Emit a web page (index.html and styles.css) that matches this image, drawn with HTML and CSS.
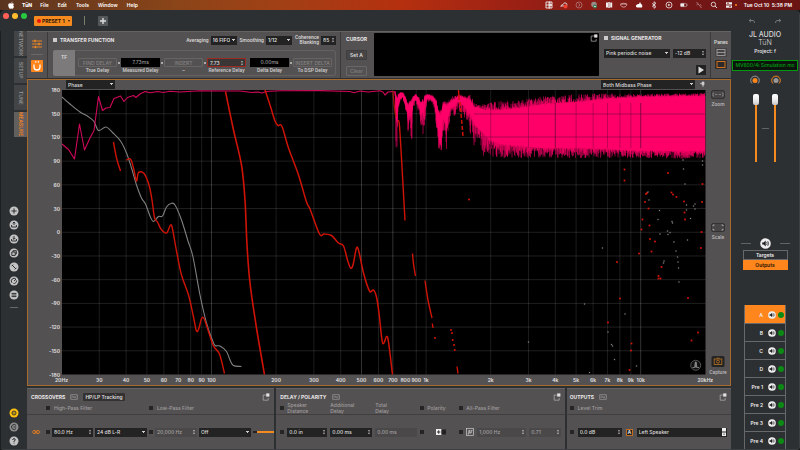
FILE: index.html
```html
<!DOCTYPE html>
<html lang="en">
<head>
<meta charset="utf-8">
<title>TüN</title>
<link rel="stylesheet" href="styles.css">
</head>
<body>
<svg width="0" height="0" class="defs" aria-hidden="true">
  <symbol id="popout" viewBox="0 0 8 8"><path d="M4 2H1.2v5.2h5V5" fill="none" stroke="#b5b3b3" stroke-width=".7"/><rect x="4.2" y=".4" width="3.2" height="3.2" fill="#e4e2e2"/></symbol>
  <symbol id="graph" viewBox="0 0 8 6"><rect x=".4" y=".4" width="7.2" height="5.2" rx="1" fill="none" stroke="#a5a3a3" stroke-width=".6"/><path d="M1 4.400l2-1.600 1.300.9L7 1.400M1 2h1.800L7 4.600" fill="none" stroke="#a5a3a3" stroke-width=".5"/></symbol>
  <symbol id="step" viewBox="0 0 4 6"><path d="M.8 2.200L2 .8l1.200 1.400zM.8 3.800L2 5.200l1.200-1.400z" fill="#c9c7c7"/></symbol>
  <symbol id="speaker" viewBox="0 0 10 10"><circle cx="5" cy="5" r="4.800" fill="#efefef"/><path d="M2 4h1.300L5.200 2.300v5.400L3.300 6H2z" fill="#1c1e1f"/><path d="M6 3.700q1 1.300 0 2.600M7 2.800q1.600 2.200 0 4.400" fill="none" stroke="#1c1e1f" stroke-width=".7"/></symbol>
</svg>

<nav class="menubar" aria-label="Menu bar">
  <svg class="apple" viewBox="0 0 8 8"><path d="M5.600.4Q4.400.7 4.300 1.900 5.500 1.800 5.600.4zM6.900 2.800Q5.600 1.700 4.300 2.400 3 1.800 1.900 2.600.8 3.600 1.400 5.600 2 7.400 2.900 7.700q.6 0 1.300-.3.8.3 1.400.3.9-.4 1.400-1.900-1.500-1.200-.1-3z" fill="#fff"/></svg>
  <a class="app" href="#">TüN</a><a href="#">File</a><a href="#">Edit</a><a href="#">Tools</a><a href="#">Window</a><a href="#">Help</a>
  <div class="status">
    <svg viewBox="0 0 8 8"><path d="M1 1h4v6H1zM4 1h3v3H4zM4 4h3v3H4zM1 4h6" fill="none" stroke="#eee" stroke-width=".9"/></svg>
    <svg viewBox="0 0 8 8"><path d="M1 5.500q0-2 2-2 1-2.500 3-1.500 1.300 1 .7 3H1.500z" fill="none" stroke="#ddd" stroke-width=".9"/><circle cx="5.500" cy="5.500" r="2" fill="#f04030"/></svg>
    <svg viewBox="0 0 8 8"><circle cx="4" cy="4" r="3" fill="none" stroke="#b07a7a" stroke-width=".8"/><path d="M3.300 2.500L5 4 3.300 5.500" fill="none" stroke="#b07a7a" stroke-width=".8"/></svg>
    <svg viewBox="0 0 8 8"><circle cx="4" cy="3.500" r="2.800" fill="#9a8a8a"/><circle cx="5" cy="5.500" r="2" fill="#3a7a50"/><path d="M4 5.500h2" stroke="#fff" stroke-width=".7"/></svg>
    <svg viewBox="0 0 8 8"><path d="M1 1.500h2v5H1zM3.300 1h1.500v6H3.300zM5.200 1.500h2v5h-2z" fill="#eee"/></svg>
    <svg viewBox="0 0 8 8"><path d="M.7 3h6v1.200q-1 2-3 2t-3-2z M.7 3q3-1.500 6 0" fill="none" stroke="#c9a0a0" stroke-width=".9"/></svg>
    <svg viewBox="0 0 8 8"><path d="M1 4.500q1-2 3-1.500L5 1l1 2q2 1 1 3.500H2q-1.500-.5-1-2z" fill="#fff"/></svg>
    <svg viewBox="0 0 8 8"><path d="M2 2.300l4 3.400-2 1.600V.7l2 1.600-4 3.400" fill="none" stroke="#eee" stroke-width=".8"/></svg>
    <svg viewBox="0 0 8 8"><circle cx="4" cy="4" r="3" fill="none" stroke="#eee" stroke-width=".8"/><path d="M3.200 2.700L5.500 4 3.200 5.300z" fill="#eee"/></svg>
    <svg viewBox="0 0 10 8"><rect x=".7" y="2" width="7.600" height="4" rx="1" fill="none" stroke="#ddd" stroke-width=".6"/><path d="M1 2.300h4v3.400H1zM9 3v2" fill="#eee" stroke="#eee" stroke-width=".5"/></svg>
    <svg viewBox="0 0 8 8"><path d="M1.500 1l5 6M1.500 4q1-1 2-1M5 3.500L6.500 4.500" fill="none" stroke="#b88" stroke-width=".8"/></svg>
    <svg viewBox="0 0 8 8"><circle cx="3.400" cy="3.400" r="2.200" fill="none" stroke="#eee" stroke-width=".8"/><path d="M5 5l2 2" stroke="#eee" stroke-width=".9"/></svg>
    <svg viewBox="0 0 8 8"><path d="M1 1.200h6v2.300H1zM1 4.500h6v2.300H1z" fill="#eee"/><path d="M2 2.300h2M4 5.600h2" stroke="#722" stroke-width=".8"/></svg>
    <i class="rec"></i>
    <time>Tue Oct 10&nbsp; 5:38 PM</time>
  </div>
</nav>

<div class="window">
  <div class="left">
    <header class="titlebar">
      <div class="lights"><i class="close"></i><i class="min"></i><i class="max"></i></div>
      <button class="preset"><i></i><span>PRESET 1</span><b></b></button>
      <div class="vbar"></div>
      <button class="add" aria-label="Add preset"><svg viewBox="0 0 10 10"><path d="M5 2v6M2 5h6" stroke="#ddd" stroke-width="1.400"/></svg></button>
    </header>

    <div class="body">
      <aside class="sidebar">
        <nav class="tabs"><a href="#">NETWORK</a><a href="#">SETUP</a><a href="#">TUNE</a><a href="#" class="on">MEASURE</a></nav>
        <div class="tools">
          <button aria-label="Add"><svg viewBox="0 0 10 10"><circle cx="5" cy="5" r="4.500"/><path d="M5 2.400v5.200M2.400 5h5.200"/></svg></button>
          <button aria-label="Open"><svg viewBox="0 0 10 10"><circle cx="5" cy="5" r="4.500"/><path d="M5 2v3M3.700 3.300L5 2l1.300 1.300M2.600 5v2h4.800V5"/></svg></button>
          <button aria-label="Save"><svg viewBox="0 0 10 10"><circle cx="5" cy="5" r="4.500"/><path d="M5 2v3.200M3.700 4L5 5.300 6.300 4M2.600 5v2h4.800V5"/></svg></button>
          <button aria-label="Copy"><svg viewBox="0 0 10 10"><circle cx="5" cy="5" r="4.500"/><path d="M2.800 4h3.400v3.400H2.800zM4 4V2.700h3.300V6H6.200"/></svg></button>
          <button aria-label="Settings"><svg viewBox="0 0 10 10"><circle cx="5" cy="5" r="4.500"/><path d="M3 3l4 4M2.600 4.200l1.600-1.600M5.800 7.400l1.600-1.600"/></svg></button>
          <button aria-label="Sync"><svg viewBox="0 0 10 10"><circle cx="5" cy="5" r="4.500"/><path d="M3 6.800A2.600 2.600 0 0 1 7 3.200L5 5M7.500 4.500A2.600 2.600 0 0 1 4.500 7.500"/></svg></button>
          <button aria-label="List"><svg viewBox="0 0 10 10"><circle cx="5" cy="5" r="4.500"/><path d="M2.600 3.400h4.800M2.600 5h4.800M2.600 6.600h4.800"/></svg></button>
          <hr>
        </div>
        <div class="tools foot">
          <button aria-label="Link"><svg viewBox="0 0 10 10"><circle cx="5" cy="5" r="4.500" class="yellow"/><circle cx="5" cy="5" r="2" class="ring"/><path d="M4.400 5h1.200"/></svg></button>
          <button aria-label="Back"><svg viewBox="0 0 10 10"><circle cx="5" cy="5" r="4.500" class="dim"/><path d="M7 3.400A2.500 2.500 0 1 0 7 6.600M4.500 5h2.700"/></svg></button>
          <button aria-label="Help"><svg viewBox="0 0 10 10"><circle cx="5" cy="5" r="4.500"/><path d="M3.700 4Q3.700 2.600 5 2.600T6.300 4Q6.200 4.700 5 5.200V6M5 6.700v.9"/></svg></button>
        </div>
      </aside>

      <main>
        <section class="top">
          <div class="modes">
            <button aria-label="Tuning"><svg viewBox="0 0 12 10"><path d="M1 2h10M1 5h10M1 8h10" stroke="#f58a1f" stroke-width=".9"/><path d="M4 .8v2.400M8 3.800v2.400M4.500 6.800v2.400" stroke="#f58a1f" stroke-width="1.400"/></svg></button>
            <hr>
            <button class="on" aria-label="Measure"><svg viewBox="0 0 12 12"><path d="M3 4.500v2.500a3 3 0 0 0 6 0V4.500" fill="none" stroke="#fff" stroke-width="1.300"/><path d="M3.900 1.800h1.400M6.700 1.800h1.400" stroke="#fff" stroke-width="1.200"/></svg></button>
          </div>
          <div class="tf">
            <div class="row">
              <h2><i></i>TRANSFER FUNCTION</h2>
              <label>Averaging <select class="w26"><option>16 FIFO</option></select></label>
              <label>Smoothing <select class="w26"><option>1/12</option></select></label>
              <label class="two"><span>Coherence<br>Blanking</span><span class="num w14"><input value="85"><svg><use href="#step"/></svg></span></label>
            </div>
            <div class="delays">
              <button class="tftab">TF</button>
              <div class="chain">
                <div><button class="ghost">FIND DELAY</button><span>True Delay</span></div>
                <div><output>7.73ms</output><span>Measured Delay</span></div>
                <div><button class="ghost">INSERT</button><span>–</span></div>
                <div><span class="num ref"><input value="7.73" aria-label="Reference Delay"><svg><use href="#step"/></svg></span><span>Reference Delay</span></div>
                <div class="eq"><output>0.00ms</output><span>Delta Delay</span></div>
                <div><button class="ghost">INSERT DELTA</button><span>To DSP Delay</span></div>
              </div>
            </div>
          </div>
          <div class="cursor"><h2>CURSOR</h2><button>Set A</button><button class="off">Clear</button></div>
          <div class="display"><svg class="pop"><use href="#popout"/></svg></div>
          <div class="siggen">
            <h2><i></i>SIGNAL GENERATOR</h2>
            <div class="pair"><select aria-label="Signal"><option>Pink periodic noise</option></select><span class="num"><input value="-12 dB" aria-label="Level"><svg><use href="#step"/></svg></span></div>
            <button class="play" aria-label="Play"><svg viewBox="0 0 10 10"><path d="M2.500 1.500L8 5 2.500 8.500z" fill="#ddd"/></svg></button>
          </div>
          <div class="panes">
            <span>Panes</span>
            <button aria-label="Split pane"><svg viewBox="0 0 12 9"><rect x="2" y="1.500" width="8" height="6" fill="none" stroke="#aaa" stroke-width=".8"/><path d="M2 4.500h8" stroke="#aaa" stroke-width=".8"/></svg></button>
            <button class="dark" aria-label="Single pane"><svg viewBox="0 0 12 9"><rect x="2" y="1.500" width="8" height="6" fill="none" stroke="#e07a20" stroke-width=".9"/></svg></button>
          </div>
        </section>

        <section class="chart">
          <div class="plotcol">
            <div class="plotbar">
              <select class="phase" aria-label="Left trace"><option>Phase</option></select>
              <select class="both" aria-label="Right trace"><option>Both Midbass Phase</option></select>
              <svg class="pin" viewBox="0 0 6 7"><path d="M1 2.500h2M3 1h2v3H3zM4 4v2" fill="#ccc" stroke="#ccc" stroke-width=".7"/></svg>
            </div>
            <svg id="plot" viewBox="28 90 678 295" role="img" aria-label="Phase against frequency"></svg>
          </div>
          <div class="rail">
            <button><svg viewBox="0 0 14 9"><rect x=".5" y=".5" width="13" height="8" rx="1.500" fill="#474545" stroke="#343232"/><path d="M3 3H2v3h1M11 3h1v3h-1M4 4.500h2M8 4.500h2M6.700 4.500h.6" fill="none" stroke="#999" stroke-width=".7"/></svg>Zoom</button>
            <button><svg viewBox="0 0 14 9"><rect x=".5" y=".5" width="13" height="8" rx="1.500" fill="#474545" stroke="#343232"/><path d="M2 3.200V2h1.500M10.500 2H12v1.200M2 5.800V7h1.500M10.500 7H12V5.800" fill="none" stroke="#bbb" stroke-width=".8"/></svg>Scale</button>
            <button><svg class="cam" viewBox="0 0 14 11"><rect x=".5" width="13" height="11" rx="1.500" fill="#252424"/><rect x="3.200" y="3" width="7.600" height="5.500" fill="none" stroke="#b97422" stroke-width=".8"/><circle cx="7" cy="5.700" r="1.500" fill="none" stroke="#b97422" stroke-width=".8"/><path d="M5.500 2.200h3" stroke="#b97422" stroke-width=".8"/></svg>Capture</button>
          </div>
        </section>

        <section class="bottom">
          <article class="xover">
            <header>
              <h2>CROSSOVERS</h2><svg class="gr"><use href="#graph"/></svg><button class="track">HP/LP Tracking</button><svg class="pop"><use href="#popout"/></svg>
            </header>
            <div class="grid heads"><span></span><input type="checkbox" id="hp"><label for="hp" class="s2">High-Pass Filter</label><input type="checkbox" id="lp"><label for="lp" class="s2">Low-Pass Filter</label></div>
            <div class="grid vals">
              <svg class="link" viewBox="0 0 11 6"><path d="M2.500 1.500h2q1.500 1.500 0 3h-2q-1.800-1.500 0-3zM6 1.500h2q1.800 1.500 0 3H6q-1.500-1.500 0-3zM3.300 3h4" fill="none" stroke="#e07a20" stroke-width=".9"/></svg>
              <input type="checkbox" aria-label="High pass on">
              <span class="num"><input value="80.0 Hz" aria-label="High pass frequency"><svg><use href="#step"/></svg></span>
              <select aria-label="High pass type"><option>24 dB L-R</option></select>
              <input type="checkbox" aria-label="Low pass on">
              <span class="num off"><input value="20,000 Hz" aria-label="Low pass frequency"><svg><use href="#step"/></svg></span>
              <select aria-label="Low pass type"><option>Off</option></select>
              <i class="track-line"></i>
            </div>
          </article>
          <article class="delay">
            <header><h2>DELAY / POLARITY</h2><svg class="gr"><use href="#graph"/></svg><svg class="pop"><use href="#popout"/></svg></header>
            <div class="grid heads"><input type="checkbox" id="sd"><label for="sd">Speaker<br>Distance</label><span>Additional<br>Delay</span><span>Total<br>Delay</span><input type="checkbox" id="po"><label for="po">Polarity</label><input type="checkbox" id="ap"><label for="ap" class="s2">All-Pass Filter</label></div>
            <div class="grid vals">
              <input type="checkbox" aria-label="Distance on">
              <span class="num"><input value="0.0 in" aria-label="Speaker distance"><svg><use href="#step"/></svg></span>
              <span class="num"><input value="0.00 ms" aria-label="Additional delay"><svg><use href="#step"/></svg></span>
              <span class="num off"><input value="0.00 ms" aria-label="Total delay"></span>
              <input type="checkbox" aria-label="Polarity on">
              <svg class="pol" viewBox="0 0 10 6"><rect width="5.500" height="6" fill="#eee"/><path d="M2.700 1.300v3.400M1 3h3.400" stroke="#222" stroke-width=".9"/><rect x="5.500" y=".5" width="4.500" height="5" fill="#222"/></svg>
              <input type="checkbox" aria-label="All pass on">
              <svg class="ap" viewBox="0 0 8 8"><rect x=".5" y=".5" width="7" height="7" fill="none" stroke="#ccc" stroke-width=".7"/><path d="M1.500 6h1.300V2.500h1V5h1.400V2.500H6.500" fill="none" stroke="#ddd" stroke-width=".7"/></svg>
              <span class="num off"><input value="1,000 Hz" aria-label="All pass frequency"><svg><use href="#step"/></svg></span>
              <span class="num off"><input value="0.71" aria-label="All pass Q"><svg><use href="#step"/></svg></span>
            </div>
          </article>
          <article class="outs">
            <header><h2>OUTPUTS</h2><svg class="gr"><use href="#graph"/></svg><svg class="pop"><use href="#popout"/></svg></header>
            <div class="grid heads"><input type="checkbox" id="lt"><label for="lt">Level Trim</label></div>
            <div class="grid vals">
              <input type="checkbox" aria-label="Trim on">
              <span class="num"><input value="0.0 dB" aria-label="Level trim"><svg><use href="#step"/></svg></span>
              <b class="chan">A</b>
              <span class="num name"><input value="Left Speaker" aria-label="Output name"><svg viewBox="0 0 4 8"><path d="M0 0h4v3.500H0zM0 4.500h4V8H0z" fill="#eee"/><path d="M2 5.500v1.500" stroke="#222" stroke-width=".8"/></svg></span>
            </div>
          </article>
        </section>
      </main>
    </div>
  </div>

  <aside class="right">
    <div class="history">
      <button aria-label="Undo"><svg viewBox="0 0 8 6"><path d="M1 2.500h4q1.500.3 1.500 2.500M3 .8L1.200 2.500 3 4.200" fill="none" stroke="#777" stroke-width="1"/></svg></button>
      <button aria-label="Redo"><svg viewBox="0 0 8 6"><path d="M7 2.500H3Q1.500 2.800 1.500 5M5 .8l1.800 1.700L5 4.200" fill="none" stroke="#777" stroke-width="1"/></svg></button>
    </div>
    <div class="brand">JL AUDIO</div>
    <div class="brand thin">TüN</div>
    <div class="project">Project: f</div>
    <div class="device">MV600/4i Simulation mo</div>
    <div class="knobs">
      <svg viewBox="0 0 10 10"><path d="M2 8.500A4.300 4.300 0 1 1 8 8.500" fill="none" stroke="#999" stroke-width="1"/><circle cx="5" cy="5.400" r="2.500" fill="#ff861c"/></svg>
      <svg viewBox="0 0 10 10"><path d="M2 8.500A4.300 4.300 0 1 1 8 8.500" fill="none" stroke="#f58a1f" stroke-width="1"/><circle cx="5" cy="5.400" r="2.500" fill="#999"/></svg>
    </div>
    <div class="faders"><input type="range" value="100" aria-label="Master level"><i></i><input type="range" value="100" aria-label="Sub level"></div>
    <div class="mute"><i></i><svg><use href="#speaker"/></svg><i></i></div>
    <div class="switch"><button>Targets</button><button class="on">Outputs</button></div>
    <div class="channels">
      <button class="on"><span>A</span><svg><use href="#speaker"/></svg><i></i></button>
      <button><span>B</span><svg><use href="#speaker"/></svg><i></i></button>
      <button><span>C</span><svg><use href="#speaker"/></svg><i></i></button>
      <button><span>D</span><svg><use href="#speaker"/></svg><i></i></button>
      <button><span>Pre 1</span><svg><use href="#speaker"/></svg><i></i></button>
      <button><span>Pre 2</span><svg><use href="#speaker"/></svg><i></i></button>
      <button><span>Pre 3</span><svg><use href="#speaker"/></svg><i></i></button>
      <button><span>Pre 4</span><svg><use href="#speaker"/></svg><i></i></button>
    </div>
  </aside>
</div>
<script src="chart.js"></script>
</body>
</html>
```
FILE: styles.css
```css
* { box-sizing: border-box; }
:root {
  --panel: #545152;
  --dark: #2d3032;
  --field: #242323;
  --orange: #ff861c;
  --text: #dedcdc;
}
body {
  margin: 0;
  min-height: 100vh;
  background: #17191a;
  color: var(--text);
  font: 500 5px/6px Inter, "Liberation Sans", sans-serif;
  display: flex;
  flex-direction: column;
}
button, input, select { font: inherit; color: inherit; margin: 0; padding: 0; border: 0; background: none; min-width: 0; border-radius: 0; }
button { cursor: pointer; }
a { color: inherit; text-decoration: none; }
h2 { margin: 0; font-size: 5px; line-height: 6px; font-weight: 700; color: #e9e7e7; white-space: nowrap; }
hr { border: 0; margin: 0; }
svg { display: block; }
.defs { position: absolute; }

/* Menu bar */
.menubar {
  height: 10px; flex: none;
  display: flex; align-items: center; gap: 9px;
  padding: 0 8px 0 7px;
  color: #fff; font-weight: 600;
  background: linear-gradient(90deg, #5a3420, #8a4518 22%, #a33f15 36%, #b5300f 50%, #981f15 66%, #741616 84%, #6a1414);
}
.menubar .app { font-weight: 800; margin-right: -1px; margin-left: -2px; }
.apple { width: 8px; height: 8px; }
.status { margin-left: auto; display: flex; align-items: center; gap: 7px; }
.status svg { width: 8px; height: 8px; }
.rec { width: 2px; height: 2px; border-radius: 50%; background: #ff861c; margin-left: -5px; }
.status time { white-space: pre; }

/* Window */
.window { flex: 1; display: flex; background: var(--dark); border-radius: 5px 5px 4px 4px; border: solid #3c3f41; border-width: 0 1px 1px 0; }
.left { flex: 1; min-width: 0; display: flex; flex-direction: column; }
.titlebar { height: 21px; display: flex; align-items: center; padding-left: 3px; }
.lights { display: flex; gap: 3px; align-self: flex-start; padding-top: 3px; }
.lights i { width: 6px; height: 6px; border-radius: 50%; }
.close { background: #ff5f57; }
.min { background: #ffbd2e; }
.max { background: #28c840; }
.preset { margin-left: 7px; width: 38px; height: 10px; background: #f58a1f; color: #2a1606; display: flex; align-items: center; gap: 1px; padding-left: 3px; border-radius: 1px; font-weight: 700; white-space: nowrap; }
.preset i { width: 4px; height: 4px; border-radius: 50%; background: #e11; flex: none; }
.preset b { border: solid transparent; border-width: 2px 1px 0; border-top-color: #2a1606; margin-left: 2px; }
.vbar { width: 1px; height: 9px; background: #78806c; margin: 0 13px 0 12px; }
.add { width: 10px; height: 10px; background: #55585a; border-radius: 1px; }
.add svg { width: 10px; height: 10px; }
.body { flex: 1; display: flex; }

/* Sidebar */
.sidebar { width: 27px; flex: none; display: flex; flex-direction: column; border-left: 1px solid #1c1e1f; }
.tabs { display: flex; flex-direction: column; align-items: flex-end; gap: 2px; }
.tabs a { writing-mode: vertical-rl; width: 13px; height: 25px; line-height: 13px; text-align: center; background: #434445; color: #989898; }
.tabs .on { background: #625f5f; color: var(--orange); }
.tools { margin-top: 69px; display: flex; flex-direction: column; align-items: center; gap: 4px; }
.tools button, .tools svg { width: 10px; height: 10px; }
.tools svg circle { fill: #c4c4c4; }
.tools svg .yellow { fill: #fdc010; }
.tools svg .dim { fill: #8d8d8d; }
.tools svg path, .tools svg .ring { fill: none; stroke: #2d3032; stroke-width: 1; }
.tools hr { width: 8px; height: 1px; background: #66686a; margin-top: 3px; }
.foot { margin-top: auto; padding-bottom: 3px; }

main { flex: 1; min-width: 0; display: flex; flex-direction: column; }

/* Fields */
select, .num { height: 9px; background: var(--field); display: block; width: 100%; }
select {
  appearance: none; padding: 0 7px 0 2px;
  background: linear-gradient(#ccc, #ccc) right 2px top 3px / 3px 1px no-repeat, linear-gradient(#ccc, #ccc) right 3px top 4px / 1px 1px no-repeat, var(--field);
}
.num { display: flex; align-items: center; padding: 0 1px 0 2px; }
.num input { width: 100%; flex: 1; height: 7px; }
.num svg { width: 4px; height: 6px; flex: none; }
.num.off { background: #4a4848; color: #a3a1a1; }
input[type=checkbox] { appearance: none; width: 4px; height: 4px; background: #262525; }
.pop { width: 8px; height: 8px; }

/* Top panel */
.top { height: 47px; display: flex; background: var(--panel); border-top: 1px solid #656262; }
.modes { width: 21px; display: flex; flex-direction: column; align-items: center; padding: 7px 0 6px; justify-content: space-between; border-right: 1px solid #3b393a; }
.modes svg { width: 12px; height: 10px; }
.modes hr { width: 12px; height: 1px; background: #6b6868; }
.modes .on { background: var(--orange); border-radius: 1px; }
.modes .on svg { height: 12px; }
.tf { width: 293px; padding: 2px 4px 2px 5px; display: flex; flex-direction: column; gap: 4px; border-right: 1px solid #3b393a; }
.row { display: flex; align-items: center; gap: 3px; height: 12px; }
.row h2 { margin-right: auto; }
h2 i { display: inline-block; width: 4px; height: 4px; background: #ccc; margin-right: 3px; }
.row label { display: flex; align-items: center; gap: 2px; font-family: Roboto, sans-serif; }
.row select { font-family: Inter, sans-serif; font-weight: 600; }
.two { text-align: right; line-height: 5px; }
.w26 { width: 26px; }
.num.w14 { width: 15px; font-family: Inter, sans-serif; }
.delays { display: flex; height: 26px; }
.tftab { width: 22px; background: #7c7a7a; border-radius: 2px 0 0 2px; font-weight: 600; padding-bottom: 12px; }
.chain { flex: 1; border: 1px solid #646161; border-left: 0; border-radius: 0 3px 3px 0; display: grid; grid-template-columns: repeat(6, 1fr); gap: 4px; padding: 7px 3px 0; }
.chain > div { text-align: center; white-space: nowrap; display: flex; flex-direction: column; align-items: center; gap: 1px; min-width: 0; position: relative; }
.chain > div + div::before { content: ""; position: absolute; left: -3px; top: 4px; width: 2px; height: 2px; background: #aaa; }
.chain .eq::before { display: none; }
.chain span:last-child { color: #cfcdcd; line-height: 5px; font-family: Roboto, sans-serif; }
.ghost { width: 100%; height: 9px; border: 1px solid #676464; border-radius: 1px; color: #858282; }
.chain output { width: 100%; height: 9px; line-height: 9px; background: #000; color: #999; }
.ref { border: 1px solid #9a2a22; background: #3a3636; }
.cursor { width: 33px; padding: 3px 0 2px 5px; display: flex; flex-direction: column; justify-content: space-between; align-items: flex-start; }
.cursor h2 { line-height: 8px; }
.cursor button { width: 21px; height: 10px; border: 1px solid #3f3d3d; background: #474545; border-radius: 1px; font-weight: 600; }
.cursor .off { background: none; color: #7d7a7a; border-color: #6a6767; }
.display { flex: 1; background: #000; margin: 1px 0 2px; border-radius: 1px; display: flex; justify-content: flex-end; padding: 1px; }
.siggen { width: 111px; padding: 3px 4px 3px 5px; display: flex; flex-direction: column; justify-content: space-between; }
.pair { display: grid; grid-template-columns: 2fr 1fr; gap: 3px; }
.play { width: 10px; height: 10px; background: #222; align-self: flex-end; }
.play svg { width: 10px; height: 10px; }
.panes { width: 21px; border-left: 1px solid #3b393a; display: flex; flex-direction: column; align-items: center; padding-top: 7px; gap: 3px; font-family: Roboto, sans-serif; }
.panes svg { width: 12px; height: 9px; }
.panes button { border-radius: 1px; background: #454343; }
.panes .dark { background: #2c2a2a; }

/* Chart */
.chart { margin-top: 1px; display: flex; background: var(--panel); border: 1px solid #a8692c; }
.plotcol { flex: 1; min-width: 0; }
.plotbar { height: 10px; display: flex; align-items: center; padding: 0 1px 1px 38px; }
.plotbar .phase { width: 49px; }
.plotbar .both { width: 94px; margin-left: auto; margin-right: 4px; }
.pin { width: 6px; height: 7px; }
#plot { width: 100%; height: auto; overflow: visible; }
#plot text { font: 600 5px Inter, sans-serif; fill: #e2e0e0; }
.rail { width: 24px; display: flex; flex-direction: column; justify-content: space-between; padding: 10px 0; }
.rail button { display: flex; flex-direction: column; align-items: center; gap: 2px; color: #bbb9b9; line-height: 6px; font-family: Roboto, sans-serif; }
.rail svg { width: 14px; height: 9px; }
.rail .cam { height: 11px; }

/* Bottom panels */
.bottom { flex: 1; margin-top: 2px; display: grid; grid-template-columns: 247fr 288fr 164fr; gap: 2px; }
.bottom article { background: var(--panel); display: flex; flex-direction: column; border-top: 1px solid #656262; padding: 3px 4px 0; }
.bottom article.outs { padding-left: 3px; }
.bottom header { display: flex; align-items: center; height: 10px; gap: 5px; }
.bottom .pop { margin-left: auto; }
.gr { width: 8px; height: 6px; }
.track { background: #333131; padding: 0 2px; height: 8px; border-radius: 1px; font-weight: 600; }
.grid { display: grid; align-items: center; }
.heads { height: 13px; color: #a09e9e; margin: 0 -4px; padding: 0 4px; border-bottom: 1px solid #403e3f; }
.vals { flex: 1; }
.s2 { grid-column: span 2; }
.xover .grid { grid-template-columns: 13px 4px 41px 52px 4px 42px 52px 1fr; gap: 2px; }
.xover label { padding-left: 2px; }
.delay .grid { grid-template-columns: 4px 40px 42px 42px 4px 29px 4px 8px 49px 1fr; gap: 3px; }
.outs .grid { grid-template-columns: 4px 44px 7px 1fr; gap: 4px; }
.link { width: 11px; height: 6px; }
.track-line { height: 2px; background: linear-gradient(90deg, #222 4px, #f58a1f 0); margin-right: -4px; }
.pol { width: 10px; height: 6px; margin-left: 9px; }
.ap { width: 8px; height: 8px; }
.chan { width: 7px; height: 7px; text-align: center; border: 1px solid #c06c20; background: #222; line-height: 5px; }
.name svg { height: 8px; }

/* Right column */
.right { width: 68px; flex: none; display: flex; flex-direction: column; align-items: center; color: #eee; }
.history { display: flex; gap: 18px; padding: 8px 0 7px; }
.history svg { width: 8px; height: 6px; }
.brand { font: 500 7px/8px Inter, sans-serif; color: #ddd; }
.thin { font-weight: 300; }
.project { line-height: 7px; padding-top: 1px; }
.device { width: 66px; height: 11px; margin-top: 5px; border: 1px solid #009a0c; color: #00a010; background: #0b130c; line-height: 9px; text-align: center; white-space: nowrap; overflow: hidden; }
.knobs { display: flex; gap: 11px; padding-top: 4px; }
.knobs svg { width: 10px; height: 10px; }
.faders { display: flex; align-items: center; gap: 3px; padding-top: 9px; }
.faders i, .mute i { width: 7px; height: 1px; background: #606264; }
.faders input { appearance: none; writing-mode: vertical-lr; direction: rtl; width: 6px; height: 68px; background: linear-gradient(90deg, transparent 2px, #f58a1f 2px 4px, transparent 4px); }
.faders input::-webkit-slider-thumb { appearance: none; width: 6px; height: 11px; border-radius: 2px; background: linear-gradient(#fff, #f2f2f2 45%, #c9c9c9); }
.mute { display: flex; align-items: center; gap: 9px; padding-top: 76px; }
.mute i { width: 10px; }
.mute svg { width: 11px; height: 11px; }
.switch { width: 45px; padding-top: 1px; display: flex; flex-direction: column; }
.switch button { height: 10px; border: 1px solid #66686a; font-weight: 600; }
.switch .on { background: var(--orange); border-color: var(--orange); color: #231405; }
.channels { width: 42px; margin-top: auto; display: flex; flex-direction: column; border: solid #66686a; border-width: 0 1px; }
.channels button { height: 18px; display: flex; align-items: center; justify-content: flex-end; gap: 2px; border-top: 1px solid #66686a; font-weight: 600; }
.channels .on { background: var(--orange); border-color: var(--orange); }
.channels svg { width: 8px; height: 8px; }
.channels span { margin-right: 3px; }
.channels i { width: 6px; height: 6px; border-radius: 50%; background: #0a8a14; margin-right: 1px; }
```
FILE: chart.js
```js
(function () {
  var NS = 'http://www.w3.org/2000/svg';
  var plot = document.getElementById('plot');
  var L = 62, R = 705.5, T = 90, B = 374.5;

  function add(tag, attrs, text) {
    var el = document.createElementNS(NS, tag);
    for (var k in attrs) el.setAttribute(k, attrs[k]);
    if (text !== undefined) el.textContent = text;
    plot.appendChild(el);
    return el;
  }
  function fx(f) { return 61.5 + 214.6 * Math.log10(f / 20); }
  function dy(d) { return T + (180 - d) * (B - T) / 360; }

  add('rect', { x: L, y: T, width: R - L, height: B - T, fill: '#000' });
  for (var g = 150; g >= -150; g -= 30) {
    add('line', { x1: L, x2: R, y1: dy(g), y2: dy(g), stroke: '#fff', 'stroke-opacity': 0.12, 'stroke-width': 1 });
  }
  [30, 40, 50, 60, 70, 80, 90, 100, 200, 300, 400, 500, 600, 700, 900, 1000, 2000, 3000, 4000, 5000, 6000, 7000, 8000, 9000, 10000].forEach(function (f) {
    var strong = [100, 500, 700, 10000].indexOf(f) >= 0;
    add('line', { x1: fx(f), x2: fx(f), y1: T, y2: B, stroke: '#fff', 'stroke-opacity': strong ? 0.2 : 0.11, 'stroke-width': 1 });
  });

  /* Catmull-Rom through the points */
  function curve(p, color, width) {
    var d = 'M' + p[0];
    for (var i = 0; i < p.length - 1; i++) {
      var a = p[i - 1] || p[i], b = p[i], c = p[i + 1], e = p[i + 2] || c;
      d += 'C' + [b[0] + (c[0] - a[0]) / 6, b[1] + (c[1] - a[1]) / 6, c[0] - (e[0] - b[0]) / 6, c[1] - (e[1] - b[1]) / 6, c[0], c[1]].join(' ');
    }
    add('path', { d: d, fill: 'none', stroke: color, 'stroke-width': width, 'stroke-linejoin': 'round' });
  }

  curve([[62, 97], [70, 104], [80, 112], [88, 116.5], [94, 121.5], [98.5, 130.5], [106, 127], [113, 133], [120.5, 141], [126.5, 153], [131.5, 168], [136.5, 185], [141.5, 198], [145.5, 204], [150, 216], [153.5, 221.5], [158.5, 216.5], [162.5, 216], [166.5, 207], [171, 203.5], [175, 205], [181.5, 220], [188, 241], [193, 257], [200, 295], [206.5, 323], [212, 339], [215, 345.5], [220, 346], [226.5, 351.5], [230, 360], [233.5, 365.5], [241.5, 366.5]], '#808080', 1.1);

  /* Magnitude trace and its noise band */
  var pink = '#ff0068';
  var line = [[62, 144], [68.5, 149.5], [74.5, 159], [79.5, 124], [84.5, 150], [89.5, 139], [94, 130.5], [98.5, 96.5], [102.5, 110.5], [106, 108], [110, 107.5], [114, 98.5], [120.5, 96], [124, 101.5], [127.5, 97.5], [133.5, 95.5], [136, 97.5], [140, 94], [145, 91.5], [150, 92.8], [158, 91.5], [163, 92.5], [170, 91.2], [180, 92], [200, 90.8], [240, 91], [252, 92.5], [258, 92], [262, 93], [266, 91.5], [280, 90.8], [320, 90.6], [350, 91.5], [354, 92.7], [360, 91], [368, 92], [380, 90.8], [383, 92], [385, 95], [388, 92], [392, 91.5], [395, 92], [396.5, 98]];
  add('polyline', { points: line.join(' '), fill: 'none', stroke: '#d0085a', 'stroke-width': 1.1, 'stroke-linejoin': 'round' });

  /* x, top, bottom of the body, furthest top spike, furthest bottom spike */
  var env = [
    [395, 92, 94, 91, 96], [396, 96, 120, 93, 158], [397, 99, 122, 97, 158], [398, 96, 106, 94, 112], [400, 93, 99, 93, 102], [403, 93, 97, 92, 99], [406, 99, 108, 97, 114],
    [408, 106, 116, 103, 132], [410, 102, 113, 100, 122], [411, 103, 120, 101, 141], [412, 102, 116, 98, 140], [413, 97, 103, 95, 108], [416, 95, 99, 94, 104], [419, 99, 106, 97, 114],
    [421, 104, 116, 102, 126], [422.5, 101, 112, 98, 128], [423.5, 104, 118, 100, 150], [424.5, 97, 106, 95, 128], [427, 95, 99, 94, 102], [431, 96, 99, 94, 103], [434, 98, 103, 96, 108],
    [436, 101, 114, 99, 124], [438, 110, 132, 106, 150], [440, 116, 144, 110, 155], [441.5, 112, 138, 108, 152], [443, 104, 118, 102, 132], [445, 104, 122, 101, 142], [446.500, 106, 130, 102, 154],
    [448, 104, 118, 100, 132], [451, 101, 108, 97, 118], [455, 99, 106, 95, 116], [458, 96, 102, 93, 110], [462, 97, 104, 95, 116], [467, 99, 110, 96, 122], [470, 100, 114, 95, 132],
    [474, 107, 124, 101, 146], [478, 108, 128, 103, 140], [484, 110, 134, 104, 158], [490, 110, 140, 102, 158], [500, 110, 144, 101, 158], [520, 108, 146, 100, 158], [545, 104, 148, 96, 158],
    [580, 102, 148, 94, 158], [605, 99, 149, 93, 158], [640, 97, 151, 94, 158], [705, 96, 151, 93, 159]];
  function at(x, k) {
    for (var i = 1; i < env.length; i++) {
      if (x <= env[i][0]) {
        var a = env[i - 1], b = env[i];
        return a[k] + (b[k] - a[k]) * (x - a[0]) / (b[0] - a[0]);
      }
    }
    return env[env.length - 1][k];
  }
  var seed = 41;
  function rnd() {
    seed = (seed * 16807) % 2147483647;
    return seed / 2147483647;
  }
  var top = [], bottom = [], strong = '', faint = '';
  for (var x = 395; x <= 705; x += 0.5) {
    var a = at(x, 1), b = at(x, 2), hi = at(x, 3), lo = at(x, 4);
    top.push([x, a + (rnd() - 0.5) * 2]);
    bottom.unshift([x, b + (rnd() - 0.5) * 2]);
    strong += 'M' + x + ' ' + (a - (a - hi) * Math.pow(rnd(), 2)) + 'V' + (b + (lo - b) * Math.pow(rnd(), 1.8));
    if (rnd() > 0.4) faint += 'M' + x + ' ' + (a - (a - hi) * rnd()) + 'V' + (b + (lo - b) * rnd());
  }
  add('path', { d: faint, stroke: '#a00446', 'stroke-width': 0.8 });
  add('path', { d: strong, stroke: pink, 'stroke-width': 0.6 });
  add('polygon', { points: top.concat(bottom).join(' '), fill: pink });
  [114, 137].forEach(function (y) {
    add('line', { x1: 474, x2: R, y1: y, y2: y, stroke: '#600838', 'stroke-opacity': 0.5, 'stroke-width': 1 });
  });
  [2000, 3000, 4000, 5000, 6000, 7000, 8000, 9000, 10000].forEach(function (f) {
    add('line', { x1: fx(f), x2: fx(f), y1: 103, y2: 148, stroke: '#600838', 'stroke-opacity': f === 10000 || f === 4000 ? 0.7 : 0.4, 'stroke-width': 1 });
  });

  /* Phase traces */
  var red = '#cf1306';
  curve([[113.5, 142], [116.5, 158], [120.5, 171]], red, 1.4);
  curve([[126.5, 160], [130.5, 159], [133.5, 168], [136.5, 181], [138.5, 172.5], [144, 173.5], [149, 185], [152, 200], [154.5, 217.5], [157.5, 222], [161, 229], [166.5, 233], [170.5, 225], [172.5, 229], [176.5, 251], [181.5, 275], [188.5, 295], [193.5, 317], [196.5, 331], [199, 328], [201.5, 318.5], [204, 318.5], [208, 330], [213.5, 346], [219.5, 354], [224.5, 373.5]], red, 1.4);
  curve([[225.5, 91.5], [233.5, 130], [241.5, 165], [245, 200], [247, 245], [250, 283], [256.5, 328], [264.5, 374.5]], red, 1.6);
  curve([[265, 90], [270, 105], [275, 121], [278, 125.5], [282, 126.5], [288.5, 148], [298.5, 175], [306.5, 202], [310, 209], [319.5, 234], [324, 234], [331.5, 235.5], [338.5, 243], [343.5, 246], [347.5, 260], [350.5, 268], [353, 265], [356.5, 248], [359, 252], [363.5, 273], [369.5, 291], [373.5, 290], [376.5, 297], [379, 313], [382, 340], [384, 343], [386.5, 336.5], [388.5, 342], [392.5, 374.5]], red, 1.5);
  curve([[393, 91], [393.5, 98], [395, 112], [396, 117]], '#a51a0c', 1.3);
  curve([[398, 120], [399.5, 126], [402, 167], [405, 220.5]], red, 1.4);
  curve([[412.5, 253.5], [413.5, 264], [415.5, 276]], red, 1.4);
  curve([[425, 280.5], [428, 300], [432, 318]], red, 1.4);
  curve([[432.3, 323.5], [433, 328]], red, 1.4);
  curve([[457, 366.5], [458, 373.5]], red, 1.4);
  curve([[458.5, 90], [459, 100]], red, 1.4);
  add('path', { d: 'M460 102L463 136', stroke: red, 'stroke-width': 1.5, 'stroke-dasharray': '4 2', fill: 'none' });

  function dots(list, color, r) {
    list.forEach(function (p) { add('rect', { x: p[0] - r / 2, y: p[1] - r / 2, width: r, height: r, fill: color }); });
  }
  dots([[435, 338], [451, 330], [452, 333], [452.7, 340], [454, 345], [454.7, 350], [469, 199.5],
    [624.5, 169.5], [624.5, 180.5], [668, 173], [647, 193], [646, 194], [645, 202], [648.5, 208.5], [642.5, 219.5], [641.5, 229.5], [649.5, 225.5], [650, 239], [655, 241.5], [671.5, 192.5], [673, 194.5], [676.5, 197], [684, 201.5], [684.5, 212.5], [685, 219.5], [702, 202], [702.5, 184], [701.5, 232], [701, 248],
    [617, 262], [639, 253.5], [651.5, 251.5], [661.5, 267], [658.5, 276], [658.5, 278.5], [660.5, 278.5], [620, 298.5], [608, 322.5], [688, 298], [698, 332.5], [691.5, 340.5], [631.5, 343.5], [631, 350.5], [629.5, 370]], '#e0150a', 1.7);
  dots([[683, 160], [702.5, 161], [702.5, 165], [683.5, 169], [685, 184], [648, 192], [649, 200], [659.5, 210.5], [658, 219.5], [672, 221.5], [672.5, 223], [667.5, 231], [668, 234.5], [670, 232.5], [660, 234], [686.5, 205], [686.5, 210], [693.5, 206], [695, 204], [695, 209], [690.5, 218.5], [674, 242], [687.5, 240], [602.5, 248],
    [676, 251], [677.5, 257], [678, 262], [678.5, 268], [679, 282], [664, 261], [663.5, 263], [584.5, 304], [625, 314], [608, 332], [611.5, 344.5], [612.5, 346], [614.5, 359.5], [589.5, 372.5], [636.5, 366], [528.5, 342]], '#808080', 1.3);

  /* Cursor badge */
  add('circle', { cx: 695.7, cy: 365.3, r: 5, fill: '#111', stroke: '#666', 'stroke-width': 0.8 });
  add('path', { d: 'M692.5 367.5h2.2l.6-5.5h.9l.6 5.5h2.2', fill: '#777', stroke: '#999', 'stroke-width': 0.8 });

  /* Axes */
  for (var d = 180; d >= -180; d -= 30) {
    add('text', { x: 60, y: dy(d) + 2, 'text-anchor': 'end' }, d);
  }
  [[20, '20Hz'], [30, '30'], [40, '40'], [50, '50'], [60, '60'], [70, '70'], [80, '80'], [90, '90'], [100, '100'], [200, '200'], [300, '300'], [400, '400'], [500, '500'], [600, '600'], [700, '700'], [800, '800'], [900, '900'], [1000, '1k'], [2000, '2k'], [3000, '3k'], [4000, '4k'], [5000, '5k'], [6000, '6k'], [7000, '7k'], [8000, '8k'], [9000, '9k'], [10000, '10k'], [20000, '20kHz']].forEach(function (t) {
    add('text', { x: fx(t[0]), y: 382, 'text-anchor': 'middle' }, t[1]);
  });
})();
```
